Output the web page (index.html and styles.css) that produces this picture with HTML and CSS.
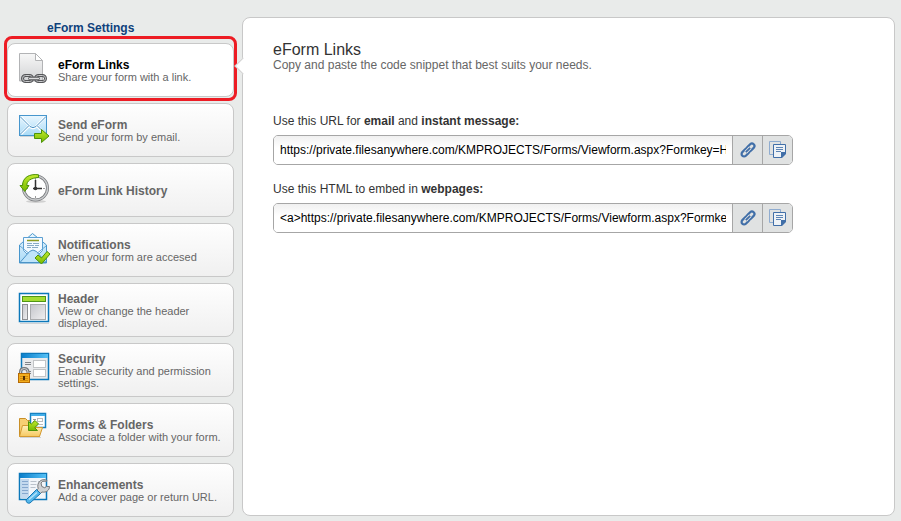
FILE: index.html
```html
<!DOCTYPE html>
<html lang="en">
<head>
    <meta charset="UTF-8">
    <meta name="viewport" content="width=device-width, initial-scale=1.0">
    <title>eForm Links</title>
    <link rel="stylesheet" href="styles.css">
</head>
<body>

    <!-- shared gradients and button icons -->
    <svg class="defs" width="0" height="0" aria-hidden="true">
        <defs>
            <linearGradient id="gPaper" x1="0" y1="0" x2="0" y2="1"><stop offset="0" stop-color="#f7f7f7"/><stop offset="1" stop-color="#d2d3d5"/></linearGradient>
            <linearGradient id="gSky" x1="0" y1="0" x2="0" y2="1"><stop offset="0" stop-color="#eaf7ff"/><stop offset="1" stop-color="#a9daf6"/></linearGradient>
            <linearGradient id="gGreen" x1="0" y1="0" x2="0" y2="1"><stop offset="0" stop-color="#c2ea2e"/><stop offset="1" stop-color="#75b900"/></linearGradient>
            <linearGradient id="gBlue" x1="0" y1="0" x2="1" y2="0"><stop offset="0" stop-color="#0b7fcb"/><stop offset="1" stop-color="#55c0f5"/></linearGradient>
            <linearGradient id="gGold" x1="0" y1="0" x2="0" y2="1"><stop offset="0" stop-color="#fff0b8"/><stop offset="1" stop-color="#f5c861"/></linearGradient>
            <linearGradient id="gGrey" x1="0" y1="0" x2="1" y2="1"><stop offset="0" stop-color="#c3c5ca"/><stop offset="1" stop-color="#f0f0f1"/></linearGradient>
        </defs>
        <symbol id="icon-link" viewBox="0 0 16 16">
            <g fill="none" stroke="#416fa8" stroke-width="2.200">
                <rect x="6" y="3" width="9" height="5" rx="2.500" transform="rotate(-45 10.500 5.500)"/>
                <rect x="1" y="8" width="9" height="5" rx="2.500" transform="rotate(-45 5.500 10.500)"/>
            </g>
            <path d="M5.800 10.200l4.400-4.400" stroke="#e2e3e3" stroke-width="3.400"/>
            <path d="M5.800 10.200l4.400-4.400" stroke="#416fa8" stroke-width="1.800"/>
        </symbol>
        <symbol id="icon-copy" viewBox="0 0 18 18">
            <path d="M4 13.500H.500V.500h11V3" fill="none" stroke="#8facd0"/>
            <path d="M4.500 3.500h12v9l-4 4h-8z" fill="#eef2f6" stroke="#416fa8"/>
            <path d="M17 11h-5v6h1l4-4z" fill="#416fa8"/>
            <path d="M7 6.500h7M7 8.500h7M7 10.500h5" stroke="#5c84b5"/>
        </symbol>
    </svg>

    <div class="page">
        <nav class="sidebar">
            <h2 class="sidebar-title">eForm Settings</h2>

            <a href="#" class="item active" aria-current="page">
                <svg class="icon" viewBox="0 0 32 32">
                    <path d="M1.500 1.500h16l7 7v20.500h-23z" fill="url(#gPaper)" stroke="#b2b3b5"/>
                    <path d="M17.500 1.500v7h7z" fill="#fff" stroke="#b2b3b5"/>
                    <g fill="none" stroke="#555659" stroke-width="3">
                        <rect x="4.500" y="23.500" width="10" height="6" rx="3"/>
                        <rect x="17.500" y="23.500" width="10" height="6" rx="3"/>
                    </g>
                    <g fill="none" stroke="#c9cacc" stroke-width="1">
                        <rect x="4.500" y="23.500" width="10" height="6" rx="3"/>
                        <rect x="17.500" y="23.500" width="10" height="6" rx="3"/>
                    </g>
                    <rect x="10.500" y="25.200" width="11" height="2.600" rx="1.300" fill="#dcdcde" stroke="#555659"/>
                </svg>
                <span class="text">
                    <strong>eForm Links</strong>
                    <span>Share your form with a link.</span>
                </span>
            </a>

            <a href="#" class="item">
                <svg class="icon" viewBox="0 0 32 32">
                    <path d="M2 24.500h26" stroke="#cfd3d6"/>
                    <rect x="1.500" y="3.500" width="27" height="20" fill="url(#gSky)" stroke="#4796cd"/>
                    <path d="M3 5l9.500 10q2.500 2 5 0L27 5M3 22l8-8M27 22l-8-8" fill="none" stroke="#fff" stroke-width="2.500"/>
                    <path d="M2 4.500l10 10q3 2.400 6 0l10-10M2 22.500l8.500-8.500M28 22.500L19.500 14" fill="none" stroke="#4b93c6"/>
                    <path d="M16.500 21.500h7v-4l7.500 6.500-7.500 6.500v-4h-7z" fill="url(#gGreen)" stroke="#4d9308"/>
                </svg>
                <span class="text">
                    <strong>Send eForm</strong>
                    <span>Send your form by email.</span>
                </span>
            </a>

            <a href="#" class="item">
                <svg class="icon" viewBox="0 0 32 32">
                    <ellipse cx="18" cy="29.500" rx="10" ry="1.500" fill="#d0d0d0"/>
                    <circle cx="17.500" cy="16" r="12" fill="#fff" stroke="#77797c" stroke-width="3"/>
                    <circle cx="17.500" cy="16" r="12" fill="none" stroke="#c9cbcd" stroke-width="1.500"/>
                    <path d="M17.500 6v2M17.500 24v2M8 16.500h2M25 16.500h2" stroke="#999"/>
                    <path d="M17.500 8v9M15 16.500h9" stroke="#333" stroke-width="1.500"/>
                    <circle cx="17.500" cy="16.500" r="1.800" fill="#333"/>
                    <path d="M20.500 2.800C11.500 1.500 4.500 5.500 4.500 13.500H2l4.800 6 4.200-6H8.800C8.800 9 12.500 6 20.500 5.500z" fill="url(#gGreen)" stroke="#4d9308"/>
                </svg>
                <span class="text">
                    <strong>eForm Link History</strong>
                </span>
            </a>

            <a href="#" class="item">
                <svg class="icon" viewBox="0 0 32 32">
                    <path d="M1.500 13L14.500 1.500 28.500 13v18h-27z" fill="url(#gSky)" stroke="#4796cd"/>
                    <path d="M5.500 5.500h19v13l-5 5h-9l-5-5z" fill="#f3faff" stroke="#5b9fd2"/>
                    <path d="M9 8.500h12" stroke="#8b9b20" stroke-width="1.500"/>
                    <path d="M9 11.500h5m1 0h6M9 13.500h7m1 0h4M9 15.500h4m1 0h6" stroke="#86aac6"/>
                    <path d="M2 30.500l9.500-11q3.500-3 7 0l9.500 11z" fill="#bfe4fa" stroke="#4b93c6"/>
                    <path d="M2 14l8.500 7M28 14l-8.500 7" stroke="#67a9d6"/>
                    <path d="M17 26l3-3 3.500 3 5.500-6.500 3 2.500-8.500 10z" fill="url(#gGreen)" stroke="#4d9308"/>
                </svg>
                <span class="text">
                    <strong>Notifications</strong>
                    <span>when your form are accesed</span>
                </span>
            </a>

            <a href="#" class="item">
                <svg class="icon" viewBox="0 0 32 32">
                    <path d="M2 31.500h29" stroke="#cfd3d6"/>
                    <rect x="1.500" y="1.500" width="29" height="28" fill="#fff" stroke="#0c78ba" stroke-width="1.500"/>
                    <rect x="4.500" y="4.500" width="23" height="5" fill="#a4dc32" stroke="#4f9614"/>
                    <rect x="4.500" y="12.500" width="5" height="15" fill="url(#gGrey)" stroke="#8d8f92"/>
                    <rect x="12.500" y="12.500" width="15" height="15" fill="url(#gGrey)" stroke="#a9abad"/>
                </svg>
                <span class="text">
                    <strong>Header</strong>
                    <span>View or change the header displayed.</span>
                </span>
            </a>

            <a href="#" class="item">
                <svg class="icon" viewBox="0 0 32 32">
                    <rect x="3.500" y="1.500" width="27" height="26" fill="#e9eaec" stroke="#0c78ba" stroke-width="1.500"/>
                    <rect x="4" y="2" width="26" height="4" fill="url(#gBlue)"/>
                    <path d="M7 10.500h6M7 12.500h6M9 19.500h4M9 21.500h4" stroke="#808489"/>
                    <rect x="15.500" y="8.500" width="12" height="7" fill="#fff" stroke="#c2c4c6"/>
                    <rect x="15.500" y="17.500" width="12" height="7" fill="#fff" stroke="#c2c4c6"/>
                    <path d="M2.500 22v-2q0-3.500 3.700-3.500T10 20v2" fill="none" stroke="#74777a" stroke-width="3"/>
                    <path d="M2.500 22v-2q0-3.500 3.700-3.500T10 20v2" fill="none" stroke="#d1d2d3"/>
                    <rect x=".5" y="21.500" width="11" height="9" fill="#f3ae1d" stroke="#b56a06"/>
                    <path d="M2 24.500h8M2 26.500h8M2 28.500h8" stroke="#d38b0c"/>
                    <path d="M6 24v4" stroke="#553000" stroke-width="2"/>
                </svg>
                <span class="text">
                    <strong>Security</strong>
                    <span>Enable security and permission settings.</span>
                </span>
            </a>

            <a href="#" class="item">
                <svg class="icon" viewBox="0 0 32 32">
                    <path d="M2 25.500h21" stroke="#cfd3d6"/>
                    <path d="M1.500 24.500v-18h6l2 2h12v16z" fill="#f6cf73" stroke="#c98f28"/>
                    <rect x="12.500" y="1.500" width="15" height="14" fill="#fff" stroke="#1681c1" stroke-width="1.500"/>
                    <rect x="13" y="2" width="14" height="2" fill="#42aee9"/>
                    <path d="M15 7.500h3M15 9.500h3" stroke="#999"/>
                    <rect x="19.500" y="6.500" width="5" height="3" fill="#fff" stroke="#bbb"/>
                    <path d="M16 12.500h9" stroke="#bbb"/>
                    <path d="M1.500 24.500l3-11h7l1 2h12l-3 9z" fill="url(#gGold)" stroke="#d39a31"/>
                    <path d="M10.500 18.500V9.500l2.800 2.500 3.700-3.500 3.500 3.500-3.800 3.700 2.800 2.800z" fill="url(#gGreen)" stroke="#4d9308"/>
                </svg>
                <span class="text">
                    <strong>Forms &amp; Folders</strong>
                    <span>Associate a folder with your form.</span>
                </span>
            </a>

            <a href="#" class="item">
                <svg class="icon" viewBox="0 0 32 32">
                    <rect x="1.500" y="1.500" width="27" height="26" fill="#f1f5f9" stroke="#0c78ba" stroke-width="1.500"/>
                    <rect x="2" y="2" width="26" height="4" fill="url(#gBlue)"/>
                    <rect x="3" y="7" width="8" height="19" fill="#c4d9ee"/>
                    <path d="M4 9.500h6M4 12.500h6M4 15.500h6M4 18.500h6M4 21.500h6" stroke="#86a8ce"/>
                    <path d="M12.500 9.500h6M12.500 12.500h6M12.500 15.500h5M20 9.500h6" stroke="#bac2cb"/>
                    <path d="M29 8.500c-4-2.500-9.500.5-9.200 6l.4 2-3.200 3.500 3.300 3.300 3.700-3.300c4 .8 7.500-1.500 7.500-5.500h-3.200l-1.500 1.300-3-1.300-.8-3.500 1.800-1.800H29z" fill="#cfd1d3" stroke="#77797c"/>
                    <path d="M18.500 17.500l4 4-10.500 9.500q-3.500 1-4-3z" fill="#55b7eb" stroke="#1677b5"/>
                    <path d="M11 27.500l8-7" stroke="#b4e3fa" stroke-width="1.500"/>
                </svg>
                <span class="text">
                    <strong>Enhancements</strong>
                    <span>Add a cover page or return URL.</span>
                </span>
            </a>
        </nav>

        <main class="panel">
            <h1>eForm Links</h1>
            <p class="intro">Copy and paste the code snippet that best suits your needs.</p>

            <div class="field">
                <label for="formUrl">Use this URL for <b>email</b> and <b>instant message:</b></label>
                <div class="input-group">
                    <input type="text" id="formUrl" value="https://private.filesanywhere.com/KMPROJECTS/Forms/Viewform.aspx?Formkey=H">
                    <button type="button" aria-label="Open link"><svg width="16" height="16"><use href="#icon-link"/></svg></button>
                    <button type="button" aria-label="Copy"><svg width="18" height="18"><use href="#icon-copy"/></svg></button>
                </div>
            </div>

            <div class="field">
                <label for="formHtml">Use this HTML to embed in <b>webpages:</b></label>
                <div class="input-group">
                    <input type="text" id="formHtml" value="&lt;a&gt;https://private.filesanywhere.com/KMPROJECTS/Forms/Viewform.aspx?Formkey=H">
                    <button type="button" aria-label="Open link"><svg width="16" height="16"><use href="#icon-link"/></svg></button>
                    <button type="button" aria-label="Copy"><svg width="18" height="18"><use href="#icon-copy"/></svg></button>
                </div>
            </div>
        </main>
    </div>

</body>
</html>
```
FILE: styles.css
```css
* {
    box-sizing: border-box;
}

body {
    margin: 0;
    background: #e9ebea;
    color: #333;
    font-family: "Liberation Sans", Arial, sans-serif;
    font-size: 12px;
    line-height: 14px;
}

h1, h2, p {
    margin: 0;
}

.defs {
    position: absolute;
}

.page {
    display: flex;
    gap: 8px;
    padding: 17px 6px 4px 7px;
}

/* left menu */
.sidebar {
    flex: 0 0 227px;
    display: flex;
    flex-direction: column;
    gap: 6px;
}

.sidebar-title {
    padding: 4px 0 2px 40px;
    font-size: 12px;
    line-height: 14px;
    color: #0f417c;
}

.item {
    position: relative;
    display: flex;
    align-items: center;
    gap: 8px;
    min-height: 54px;
    padding: 0 10px;
    border: 1px solid #c8c8c8;
    border-radius: 8px;
    background: linear-gradient(#fefefe, #f0f0f0);
    color: #666;
    font-size: 11px;
    line-height: 12px;
    text-decoration: none;
}

.item .icon {
    flex: none;
    align-self: flex-start;
    width: 32px;
    height: 32px;
    margin-top: 8px;
}

.item .text {
    display: flex;
    flex-direction: column;
    padding-top: 2px;
}

.item strong {
    font-size: 12px;
    line-height: 12px;
}

.item.active {
    background: #fff;
}

.item.active strong {
    color: #000;
}

/* red frame round the current item */
.item.active::after {
    content: "";
    position: absolute;
    inset: -8px -4px -5px;
    border: 3px solid #ed1c24;
    border-radius: 8px;
}

/* right panel */
.panel {
    position: relative;
    flex: 1;
    min-width: 0;
    margin-bottom: 1px;
    padding: 24px 30px;
    border: 1px solid #c8c8c8;
    border-radius: 8px;
    background: #fff;
}

.panel::before {
    content: "";
    position: absolute;
    top: 42px;
    left: -6px;
    width: 11px;
    height: 11px;
    border: 1px solid #d0d0d0;
    border-width: 0 0 1px 1px;
    background: #fff;
    transform: rotate(45deg);
}

.panel h1 {
    font-size: 16px;
    line-height: 16px;
    font-weight: normal;
}

.intro {
    margin-bottom: 42px;
    color: #666;
}

.field {
    max-width: 520px;
    margin-bottom: 17px;
}

.field label {
    display: block;
    margin-bottom: 7px;
}

.input-group {
    display: flex;
    height: 30px;
    border: 1px solid #a6a6a6;
    border-radius: 5px;
    overflow: hidden;
}

.input-group input {
    flex: 1;
    min-width: 0;
    padding: 0 6px;
    border: none;
    background: linear-gradient(#f0f0f0, #fff 12px);
    color: #000;
    font-family: inherit;
    font-size: 12px;
}

.input-group button {
    display: flex;
    align-items: center;
    justify-content: center;
    width: 30px;
    padding: 0;
    border: none;
    border-left: 1px solid #a6a6a6;
    background: #e0e2e2;
    cursor: pointer;
}

.input-group button:hover {
    background: #d5d8d8;
}
```
